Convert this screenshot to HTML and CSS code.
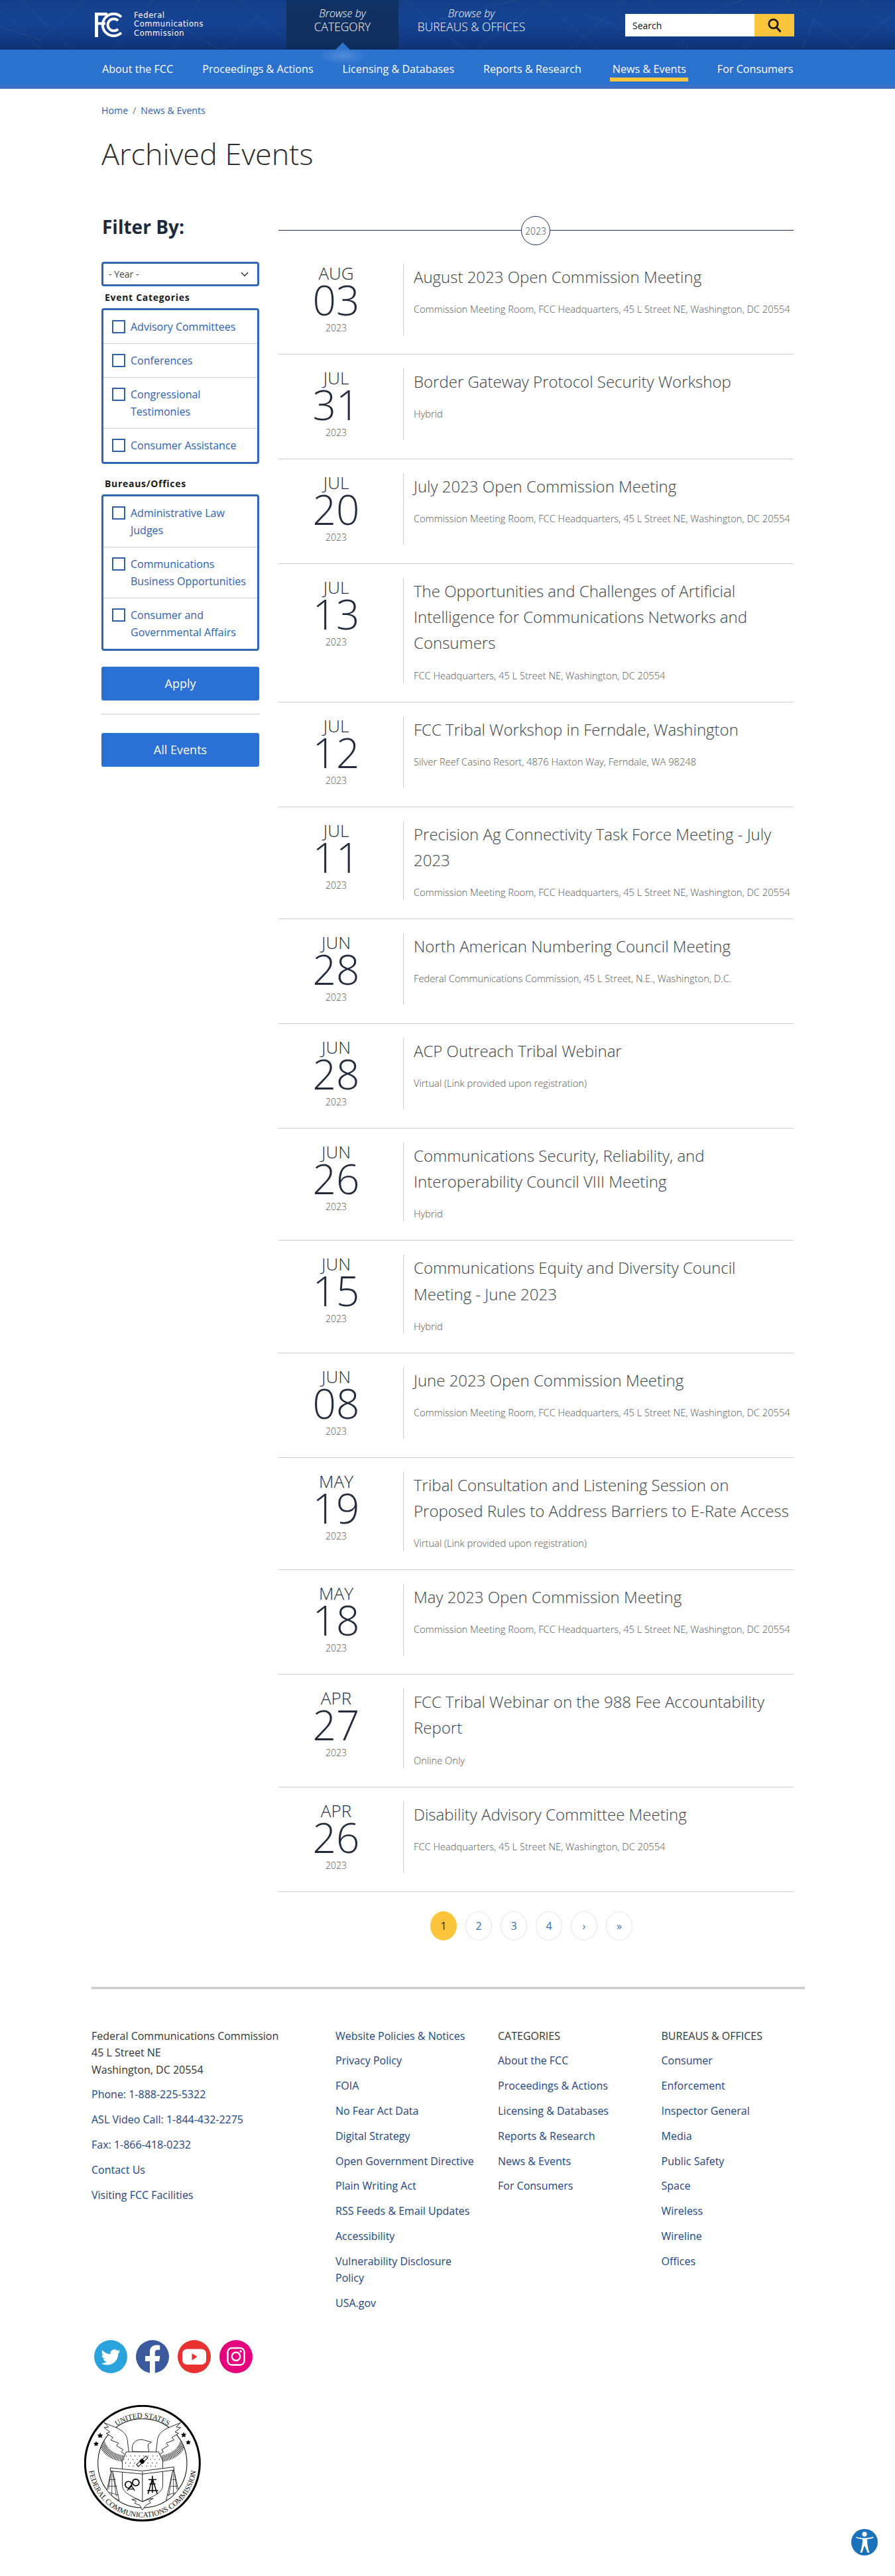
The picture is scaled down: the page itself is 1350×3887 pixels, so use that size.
FILE: index.html
```html
<!DOCTYPE html>
<html lang="en">
<head>
<meta charset="utf-8">
<title>Archived Events | Federal Communications Commission</title>
<link rel="stylesheet" href="styles.css">
</head>
<body>
<header class="site-header">
  <div class="top-band">
    <svg class="mesh" viewBox="0 0 1350 74" preserveAspectRatio="none" aria-hidden="true">
      <g fill="none" stroke="#fff" stroke-opacity=".07" stroke-width="1">
        <path d="M0 10 L60 74 M30 0 L110 74 M130 0 L60 60 L0 40 M230 0 L170 74 M240 20 L330 74 M300 0 L260 74 M360 0 L430 60 M400 10 L340 74"/>
        <path d="M610 0 L700 74 M660 30 L780 0 M720 74 L800 10 M820 0 L900 74 M880 20 L980 60 M940 0 L860 74 M975 0 L1040 74 M1040 30 L1120 0 M1120 74 L1190 0 M1200 10 L1290 74 M1240 0 L1210 74 M1300 0 L1350 50 M1350 20 L1280 74"/>
      </g>
    </svg>
    <div class="top-inner">
      <a class="logo" href="#">
        <svg class="logo-mark" viewBox="0 0 46 37" aria-hidden="true">
          <path fill="#fff" d="M0 0h19v4.400H5v10.200h11v4H5V37H0z"/>
          <path fill="none" stroke="#fff" stroke-width="4" d="M40 6.600A16.600 16.600 0 1 0 40 30.400"/>
          <path fill="none" stroke="#fff" stroke-width="4" d="M35 12.200A9 9 0 1 0 35 24.800"/>
        </svg>
        <span class="logo-text">Federal<br>Communications<br>Commission</span>
      </a>
      <a class="browse browse-active" href="#"><em>Browse by</em><span>CATEGORY</span></a>
      <a class="browse browse-second" href="#"><em>Browse by</em><span>BUREAUS &amp; OFFICES</span></a>
      <form class="search">
        <span class="search-field">Search</span>
        <button class="search-btn" type="button" aria-label="Search">
          <svg viewBox="0 0 24 24" width="24" height="24" aria-hidden="true"><circle cx="10.500" cy="10" r="6.700" fill="none" stroke="#1c1c1c" stroke-width="2.800"/><path d="M15 15l5.600 6" stroke="#1c1c1c" stroke-width="3.200" stroke-linecap="round"/></svg>
        </button>
      </form>
    </div>
    <span class="tab-arrow"></span>
  </div>
  <nav class="main-nav">
    <span class="nav-glow"></span>
    <a href="#">About the FCC</a>
    <a href="#">Proceedings &amp; Actions</a>
    <a href="#">Licensing &amp; Databases</a>
    <a href="#">Reports &amp; Research</a>
    <a class="nav-current" href="#">News &amp; Events</a>
    <a href="#">For Consumers</a>
  </nav>
</header>

<main class="page">
  <div class="crumbs"><a href="#">Home</a><span class="crumb-sep">/</span><a href="#">News &amp; Events</a></div>
  <h1 class="page-title">Archived Events</h1>

  <div class="columns">
    <aside class="filters">
      <h2 class="filter-title">Filter By:</h2>
      <div class="year-select"><span>- Year -</span>
        <svg viewBox="0 0 12 8" width="12" height="8" aria-hidden="true"><path d="M1 1.200l5 5 5-5" fill="none" stroke="#333" stroke-width="1.600"/></svg>
      </div>
      <h3 class="group-label">Event Categories</h3>
      <ul class="check-box">
        <li><input type="checkbox" aria-label="Advisory Committees"><a href="#">Advisory Committees</a></li>
        <li><input type="checkbox" aria-label="Conferences"><a href="#">Conferences</a></li>
        <li><input type="checkbox" aria-label="Congressional Testimonies"><a href="#">Congressional Testimonies</a></li>
        <li><input type="checkbox" aria-label="Consumer Assistance"><a href="#">Consumer Assistance</a></li>
      </ul>
      <h3 class="group-label group-label-second">Bureaus/Offices</h3>
      <ul class="check-box">
        <li><input type="checkbox" aria-label="Administrative Law Judges"><a href="#">Administrative Law Judges</a></li>
        <li><input type="checkbox" aria-label="Communications Business Opportunities"><a href="#">Communications Business Opportunities</a></li>
        <li><input type="checkbox" aria-label="Consumer and Governmental Affairs"><a href="#">Consumer and Governmental Affairs</a></li>
      </ul>
      <a class="action" href="#">Apply</a>
      <hr class="filter-rule">
      <a class="action" href="#">All Events</a>
    </aside>

    <section class="events">
      <div class="year-rule"><span>2023</span></div>

      <article class="event"><div class="date"><span class="mon">AUG</span><span class="day">03</span><span class="yr">2023</span></div><div class="info"><h3>August 2023 Open Commission Meeting</h3><p>Commission Meeting Room, FCC Headquarters, 45 L Street NE, Washington, DC 20554</p></div></article>
      <article class="event"><div class="date"><span class="mon">JUL</span><span class="day">31</span><span class="yr">2023</span></div><div class="info"><h3>Border Gateway Protocol Security Workshop</h3><p>Hybrid</p></div></article>
      <article class="event"><div class="date"><span class="mon">JUL</span><span class="day">20</span><span class="yr">2023</span></div><div class="info"><h3>July 2023 Open Commission Meeting</h3><p>Commission Meeting Room, FCC Headquarters, 45 L Street NE, Washington, DC 20554</p></div></article>
      <article class="event"><div class="date"><span class="mon">JUL</span><span class="day">13</span><span class="yr">2023</span></div><div class="info"><h3>The Opportunities and Challenges of Artificial Intelligence for Communications Networks and Consumers</h3><p>FCC Headquarters, 45 L Street NE, Washington, DC 20554</p></div></article>
      <article class="event"><div class="date"><span class="mon">JUL</span><span class="day">12</span><span class="yr">2023</span></div><div class="info"><h3>FCC Tribal Workshop in Ferndale, Washington</h3><p>Silver Reef Casino Resort, 4876 Haxton Way, Ferndale, WA 98248</p></div></article>
      <article class="event"><div class="date"><span class="mon">JUL</span><span class="day">11</span><span class="yr">2023</span></div><div class="info"><h3>Precision Ag Connectivity Task Force Meeting - July 2023</h3><p>Commission Meeting Room, FCC Headquarters, 45 L Street NE, Washington, DC 20554</p></div></article>
      <article class="event"><div class="date"><span class="mon">JUN</span><span class="day">28</span><span class="yr">2023</span></div><div class="info"><h3>North American Numbering Council Meeting</h3><p>Federal Communications Commission, 45 L Street, N.E., Washington, D.C.</p></div></article>
      <article class="event"><div class="date"><span class="mon">JUN</span><span class="day">28</span><span class="yr">2023</span></div><div class="info"><h3>ACP Outreach Tribal Webinar</h3><p>Virtual (Link provided upon registration)</p></div></article>
      <article class="event"><div class="date"><span class="mon">JUN</span><span class="day">26</span><span class="yr">2023</span></div><div class="info"><h3>Communications Security, Reliability, and Interoperability Council VIII Meeting</h3><p>Hybrid</p></div></article>
      <article class="event"><div class="date"><span class="mon">JUN</span><span class="day">15</span><span class="yr">2023</span></div><div class="info"><h3>Communications Equity and Diversity Council Meeting - June 2023</h3><p>Hybrid</p></div></article>
      <article class="event"><div class="date"><span class="mon">JUN</span><span class="day">08</span><span class="yr">2023</span></div><div class="info"><h3>June 2023 Open Commission Meeting</h3><p>Commission Meeting Room, FCC Headquarters, 45 L Street NE, Washington, DC 20554</p></div></article>
      <article class="event"><div class="date"><span class="mon">MAY</span><span class="day">19</span><span class="yr">2023</span></div><div class="info"><h3>Tribal Consultation and Listening Session on Proposed Rules to Address Barriers to E-Rate Access</h3><p>Virtual (Link provided upon registration)</p></div></article>
      <article class="event"><div class="date"><span class="mon">MAY</span><span class="day">18</span><span class="yr">2023</span></div><div class="info"><h3>May 2023 Open Commission Meeting</h3><p>Commission Meeting Room, FCC Headquarters, 45 L Street NE, Washington, DC 20554</p></div></article>
      <article class="event"><div class="date"><span class="mon">APR</span><span class="day">27</span><span class="yr">2023</span></div><div class="info"><h3>FCC Tribal Webinar on the 988 Fee Accountability Report</h3><p>Online Only</p></div></article>
      <article class="event"><div class="date"><span class="mon">APR</span><span class="day">26</span><span class="yr">2023</span></div><div class="info"><h3>Disability Advisory Committee Meeting</h3><p>FCC Headquarters, 45 L Street NE, Washington, DC 20554</p></div></article>

      <div class="pager">
        <a class="pg pg-on" href="#">1</a>
        <a class="pg" href="#">2</a>
        <a class="pg" href="#">3</a>
        <a class="pg" href="#">4</a>
        <a class="pg pg-small" href="#">›</a>
        <a class="pg pg-small" href="#">»</a>
      </div>
    </section>
  </div>
</main>

<footer class="site-footer">
  <div class="foot-rule"></div>
  <div class="foot-cols">
    <div class="foot-col">
      <p class="foot-address">Federal Communications Commission<br>45 L Street NE<br>Washington, DC 20554</p>
      <a href="#">Phone: 1-888-225-5322</a>
      <a href="#">ASL Video Call: 1-844-432-2275</a>
      <a href="#">Fax: 1-866-418-0232</a>
      <a href="#">Contact Us</a>
      <a href="#">Visiting FCC Facilities</a>
    </div>
    <div class="foot-col">
      <a href="#">Website Policies &amp; Notices</a>
      <a href="#">Privacy Policy</a>
      <a href="#">FOIA</a>
      <a href="#">No Fear Act Data</a>
      <a href="#">Digital Strategy</a>
      <a href="#">Open Government Directive</a>
      <a href="#">Plain Writing Act</a>
      <a href="#">RSS Feeds &amp; Email Updates</a>
      <a href="#">Accessibility</a>
      <a href="#">Vulnerability Disclosure Policy</a>
      <a href="#">USA.gov</a>
    </div>
    <div class="foot-col">
      <span class="foot-head">CATEGORIES</span>
      <a href="#">About the FCC</a>
      <a href="#">Proceedings &amp; Actions</a>
      <a href="#">Licensing &amp; Databases</a>
      <a href="#">Reports &amp; Research</a>
      <a href="#">News &amp; Events</a>
      <a href="#">For Consumers</a>
    </div>
    <div class="foot-col">
      <span class="foot-head">BUREAUS &amp; OFFICES</span>
      <a href="#">Consumer</a>
      <a href="#">Enforcement</a>
      <a href="#">Inspector General</a>
      <a href="#">Media</a>
      <a href="#">Public Safety</a>
      <a href="#">Space</a>
      <a href="#">Wireless</a>
      <a href="#">Wireline</a>
      <a href="#">Offices</a>
    </div>
  </div>

  <div class="social">
    <a href="#" aria-label="Twitter"><svg viewBox="0 0 50 50" width="50" height="50"><circle cx="25" cy="25" r="25" fill="#2aa3dc"/><path transform="translate(10.500 11.500) scale(1.200)" fill="#fff" d="M23.953 4.570a10 10 0 01-2.825.775 4.958 4.958 0 002.163-2.723c-.951.555-2.005.959-3.127 1.184a4.920 4.920 0 00-8.384 4.482C7.690 8.095 4.067 6.130 1.640 3.162a4.822 4.822 0 00-.666 2.475c0 1.710.870 3.213 2.188 4.096a4.904 4.904 0 01-2.228-.616v.060a4.923 4.923 0 003.946 4.827 4.996 4.996 0 01-2.212.085 4.936 4.936 0 004.604 3.417 9.867 9.867 0 01-6.102 2.105c-.390 0-.779-.023-1.170-.067a13.995 13.995 0 007.557 2.209c9.053 0 13.998-7.496 13.998-13.985 0-.210 0-.420-.015-.630A9.935 9.935 0 0024 4.590z"/></svg></a>
    <a href="#" aria-label="Facebook"><svg viewBox="0 0 50 50" width="50" height="50"><circle cx="25" cy="25" r="25" fill="#3b5a9d"/><path fill="#fff" d="M21 49.800V32h-7v-8h7v-6.200c0-6.600 4-10.200 10-10.200 2.600 0 5.200.400 5.200.400v6.800h-3.200c-3.200 0-4.200 2-4.200 4V24h7.600l-1.200 8h-6.400v17.800a25 25 0 01-7.800 0z"/></svg></a>
    <a href="#" aria-label="YouTube"><svg viewBox="0 0 50 50" width="50" height="50"><circle cx="25" cy="25" r="25" fill="#e9322f"/><rect x="7" y="13.500" width="36" height="23.500" rx="7" fill="#fff"/><path fill="#e9322f" d="M21.500 20l8 5.200-8 5.200z"/></svg></a>
    <a href="#" aria-label="Instagram"><svg viewBox="0 0 50 50" width="50" height="50"><circle cx="25" cy="25" r="25" fill="#e6007e"/><rect x="12.500" y="12" width="25" height="25.500" rx="6" fill="none" stroke="#fff" stroke-width="2.400"/><circle cx="25" cy="24.700" r="6.200" fill="none" stroke="#fff" stroke-width="2.400"/><circle cx="32" cy="17" r="1.700" fill="#fff"/></svg></a>
  </div>

  <svg class="seal" viewBox="50 388 527 527" role="img" aria-label="Seal of the Federal Communications Commission">
    <defs>
      <path id="arc-top" d="M136 548 A205 205 0 0 1 490 548"/>
      <path id="arc-bottom" d="M75 600 A244 244 0 1 0 552 600"/>
      <clipPath id="inner-disc"><circle cx="313" cy="651" r="200"/></clipPath>
    </defs>
    <circle cx="313" cy="651" r="259" fill="#fff" stroke="#000" stroke-width="9"/>
    <circle cx="313" cy="651" r="201" fill="none" stroke="#000" stroke-width="3"/>
    <g fill="#000"><path d="M122 513l4 8 9 1-6 6 2 9-9-4-8 4 1-9-6-6 9-1z"/><path d="M104 552l4 7 8 1-6 6 2 8-8-4-8 4 2-8-6-6 8-1z"/><path d="M500 510l3 8 9 1-6 6 1 9-7-4-9 4 2-9-6-6 9-1z"/><path d="M521 545l3 7 8 1-6 6 2 8-7-4-8 4 1-8-5-6 8-1z"/></g>
    <g fill="#fff" stroke="#000" stroke-width="2.500">
      <path d="M140 468 C190 490 245 500 246 555 L252 604 L236 612 L218 600 L226 590 L196 572 L205 560 L170 546 L180 535 L150 516 L166 510 L140 490 L160 487Z"/>
      <path d="M486 468 C436 490 381 500 380 555 L374 604 L390 612 L408 600 L400 590 L430 572 L421 560 L456 546 L446 535 L476 516 L460 510 L486 490 L466 487Z"/>
      <path fill="none" stroke-width="30" stroke-dasharray="2.500 4" clip-path="url(#inner-disc)" d="M128 556 Q150 620 228 630"/>
      <path fill="none" stroke-width="30" stroke-dasharray="2.500 4" clip-path="url(#inner-disc)" d="M498 556 Q476 620 398 630"/>
      <path d="M268 598 C260 566 280 542 312 544 L354 556 L338 566 L342 600Z"/>
      <g clip-path="url(#inner-disc)">
        <path d="M175 672 L150 785 L208 820Z"/>
        <path d="M453 672 L478 785 L420 820Z"/>
        <path fill="none" stroke-width="2" d="M165 725L192 725M158 755L198 755M154 780L205 795M175 672V810M170 700L160 770M180 700L195 800M453 672V810M448 725H462M440 755H470M424 795L476 780M458 700L468 770M447 700L432 800"/>
      </g>
      <path d="M222 640 L240 600 H386 L405 640 V750 C405 790 345 805 313 825 C281 805 222 790 222 750Z"/>
      <path d="M265 815 L285 822 L278 832 L300 840 L313 862 L330 840 L350 830 L342 820 L362 810 L345 812 L313 825 L285 812Z"/>
    </g>
    <g fill="none" stroke="#000">
      <path stroke-width="4" stroke-dasharray="3 17" d="M238 618H390M228 634H400M236 650H395M250 664H380"/>
      <path stroke-width="2.500" fill="#fff" d="M168 672 L313 686 L455 668 V682 L313 700 L168 686Z"/>
      <path stroke-width="2.500" d="M313 690V825"/>
      <circle cx="250" cy="748" r="15" stroke-width="5"/>
      <circle cx="283" cy="738" r="15" stroke-width="5"/>
      <path stroke-width="4" d="M245 775L262 750L278 775M250 768H272"/>
      <path stroke-width="4.500" d="M358 708V785M358 720L338 790M358 720L380 790M340 725H376M345 745H372M335 775H384"/>
    </g>
    <g transform="rotate(-42 316 645)">
      <rect x="286" y="634" width="20" height="12" fill="#fff" stroke="#000" stroke-width="3"/>
      <rect x="306" y="630" width="16" height="20" fill="#000"/>
      <rect x="322" y="634" width="22" height="12" fill="#fff" stroke="#000" stroke-width="3"/>
    </g>
    <text class="seal-text"><textPath href="#arc-top" startOffset="50%" text-anchor="middle">UNITED STATES</textPath></text>
    <text class="seal-text seal-text-bottom"><textPath href="#arc-bottom" startOffset="50%" text-anchor="middle">FEDERAL COMMUNICATIONS COMMISSION</textPath></text>
  </svg>
</footer>

<a class="a11y" href="#" aria-label="Accessibility">
  <svg viewBox="0 0 40 40" width="40" height="40"><circle cx="20" cy="20" r="20" fill="#1b72bb"/><circle cx="20" cy="7.800" r="3.600" fill="#fff"/><path fill="#fff" d="M7 11.800c4 1.400 8.600 2 13 2s9-.600 13-2l.400 1.800c-3 1.100-6.400 1.800-9.400 2.100.100 6 .700 11 3.400 20h-2.800L20.500 26h-1L16.400 35.700h-2.800c2.700-9 3.300-14 3.400-20-3-.300-6.400-1-9.400-2.100z"/></svg>
</a>
</body>
</html>
```
FILE: styles.css
```css
* { box-sizing: border-box; }
html, body { margin: 0; padding: 0; }
body {
  font-family: "Open Sans", "Liberation Sans", sans-serif;
  color: #333;
  background: #fff;
  position: relative;
}
a { text-decoration: none; color: inherit; }
ul { list-style: none; margin: 0; padding: 0; }

/* header */
.top-band {
  position: relative;
  height: 75px;
  background: linear-gradient(#143f88, #154393 45%, #11387f 85%, #0f3272);
}
.mesh { position: absolute; inset: 0; width: 100%; height: 74px; }
.top-inner { position: relative; display: flex; align-items: stretch; height: 74px; padding-left: 143px; }
.logo { display: flex; width: 289px; padding-top: 19px; }
.logo-mark { width: 46px; height: 37px; flex: none; }
.logo-text {
  margin: -2px 0 0 13px;
  font-family: "DejaVu Sans", sans-serif;
  font-size: 11.500px;
  line-height: 13.400px;
  letter-spacing: 0.6px;
  font-weight: 400;
  color: #fff;
}
.browse {
  display: flex;
  flex-direction: column;
  align-items: center;
  color: #fff;
  padding-top: 11px;
  font-size: 17.400px;
  font-weight: 300;
  line-height: 20px;
}
.browse em { font-style: italic; font-size: 16px; line-height: 19px; }
.browse span { line-height: 20px; }
.browse-active { width: 169px; background: linear-gradient(#103163, #102f5f 80%, #0e2c5b); }
.browse-second { width: 220px; }
.search { display: flex; margin: 21px 0 0 122px; height: 34px; }
.search-field { width: 195px; background: #fff; padding: 0 11px; font-size: 14px; line-height: 36px; color: #111; }
.search-btn { width: 60px; border: 0; padding: 0; background: #fdc53b; display: flex; align-items: center; justify-content: center; }
.tab-arrow {
  position: absolute;
  left: 506px;
  top: 64px;
  width: 0;
  height: 0;
  border-left: 11px solid transparent;
  border-right: 11px solid transparent;
  border-bottom: 11px solid #2e72cc;
}
.main-nav {
  position: relative;
  display: flex;
  height: 59px;
  padding: 0 0 0 154px;
  background: linear-gradient(#2b72cf 0, #2b72cf 88%, #3a70c2 92%);
  color: #fff;
  font-size: 16.150px;
  font-weight: 400;
}
.nav-glow {
  position: absolute;
  left: 480px;
  top: 0;
  width: 74px;
  height: 22px;
  background: radial-gradient(ellipse at 50% 40%, rgba(255,255,255,.18), rgba(255,255,255,0) 72%);
}
.main-nav a { position: relative; margin-right: 44px; padding-top: 16px; line-height: 26px; white-space: nowrap; }
.main-nav .nav-current { margin: 0 47px 0 3px; }
.nav-current::after {
  content: "";
  position: absolute;
  left: -4px;
  right: -3px;
  top: 42px;
  height: 6px;
  background: #fdc53b;
}

/* page */
.page { padding: 0 152px 0 153px; }
.crumbs { padding-top: 23px; font-size: 14.200px; line-height: 20px; color: #2d62b5; }
.crumb-sep { margin: 0 7px; color: #777; }
.page-title {
  margin: 24px 0 0;
  font-size: 45px;
  line-height: 62px;
  font-weight: 300;
  color: #2c2c2c;
}
.columns { display: flex; gap: 29px; margin-top: 60px; align-items: flex-start; }

/* filters */
.filters { width: 238px; flex: none; }
.filter-title { margin: 0; font-size: 28px; line-height: 38px; font-weight: 700; color: #1d2a3a; padding-left: 1px; }
.year-select {
  display: flex;
  align-items: center;
  justify-content: space-between;
  height: 37px;
  margin-top: 34px;
  padding: 0 13px 0 8px;
  border: 3px solid #3165b6;
  border-radius: 4px;
  font-size: 14px;
  color: #444;
}
.group-label { margin: 7px 0 0; padding-left: 5px; font-size: 14px; line-height: 20px; font-weight: 700; letter-spacing: .7px; color: #1a1a1a; }
.group-label-second { margin-top: 20px; }
.check-box { margin-top: 6px; border: 3px solid #3165b6; border-radius: 4px; }
.check-box li { display: flex; align-items: flex-start; padding: 12px 12px 12px 13px; border-bottom: 1px solid #ccc; font-size: 16px; line-height: 26px; color: #2d62b5; }
.check-box li:last-child { border-bottom: 0; }
.check-box input {
  appearance: none;
  flex: none;
  width: 20px;
  height: 20px;
  margin: 3px 8px 0 0;
  border: 2px solid #2f5fa8;
  background: #fff;
}
.action {
  display: block;
  height: 51px;
  margin-top: 24px;
  border-radius: 3px;
  background: #2b70d4;
  color: #fff;
  text-align: center;
  font-size: 18px;
  line-height: 50px;
}
.filter-rule { margin: 20px -1px 28px; border: 0; border-top: 1px solid #ccc; }

/* events */
.events { width: 777px; margin-top: 3px; }
.year-rule { position: relative; height: 44px; }
.year-rule::before { content: ""; position: absolute; left: 0; right: 0; top: 21px; border-top: 1px solid #1f2f5c; }
.year-rule span {
  position: absolute;
  left: 366px;
  top: 0;
  width: 44px;
  height: 44px;
  border: 1px solid #1f2f5c;
  border-radius: 50%;
  background: #fff;
  text-align: center;
  font-size: 14px;
  font-weight: 300;
  line-height: 44px;
  color: #444;
}
.event { display: flex; align-items: stretch; padding: 21px 0 28px; border-bottom: 1px solid #ccc; }
.year-rule + .event { padding-top: 28px; }
.date { width: 188px; flex: none; display: flex; flex-direction: column; align-items: center; height: 108px; padding-right: 14px; text-transform: uppercase; color: #222c3c; }
.mon { font-size: 26px; line-height: 28px; font-weight: 300; }
.day { font-size: 62px; line-height: 52px; font-weight: 300; }
.yr { font-size: 14px; line-height: 20px; font-weight: 300; margin-top: 7px; color: #555; }
.info { flex: 1; min-height: 108px; border-left: 1px solid #ccc; padding-left: 15px; }
.info h3 { margin: 0; font-size: 24px; line-height: 39.200px; font-weight: 300; color: #3a3f48; }
.info p { margin: 17px 0 0; font-size: 14.700px; line-height: 24px; font-weight: 300; color: #555; }

/* pager */
.pager { display: flex; gap: 13px; padding: 29px 0 0 229px; }
.pg {
  width: 40px;
  height: 44px;
  border: 1px solid #e6e6ea;
  border-radius: 50%;
  text-align: center;
  font-size: 16px;
  line-height: 42px;
  color: #3a6bb5;
}
.pg-on { background: #fdc53b; border-color: #fdc53b; color: #222; }
.pg-small { font-size: 16px; }

/* footer */
.site-footer { margin-top: 70px; padding-bottom: 70px; }
.foot-rule { margin: 0 136px 0 138px; height: 4px; background: #ccc; border-bottom: 1px solid #e8e8e8; }
.foot-cols { display: grid; grid-template-columns: 368px 245px 246.500px 1fr; padding: 58px 0 0 138px; font-size: 16px; line-height: 25.500px; color: #1d4482; }
.foot-col a, .foot-head, .foot-address { display: block; margin: 0 0 12.300px; }
.foot-col:nth-child(2) { padding-right: 35px; }
.foot-address, .foot-head { color: #333; }
.social { display: flex; gap: 13px; margin-top: 30px; padding-left: 142px; }
.social a { display: block; width: 50px; height: 50px; }
.social svg { display: block; }
.seal { display: block; margin: 48px 0 0 127px; width: 176px; height: 176px; }
.seal-text { font-family: "Liberation Serif", serif; font-size: 33px; fill: #111; }
.seal-text-bottom { font-size: 34px; }
.a11y { position: absolute; left: 1284px; top: 3816px; width: 40px; height: 40px; }
.a11y svg { display: block; }
```
